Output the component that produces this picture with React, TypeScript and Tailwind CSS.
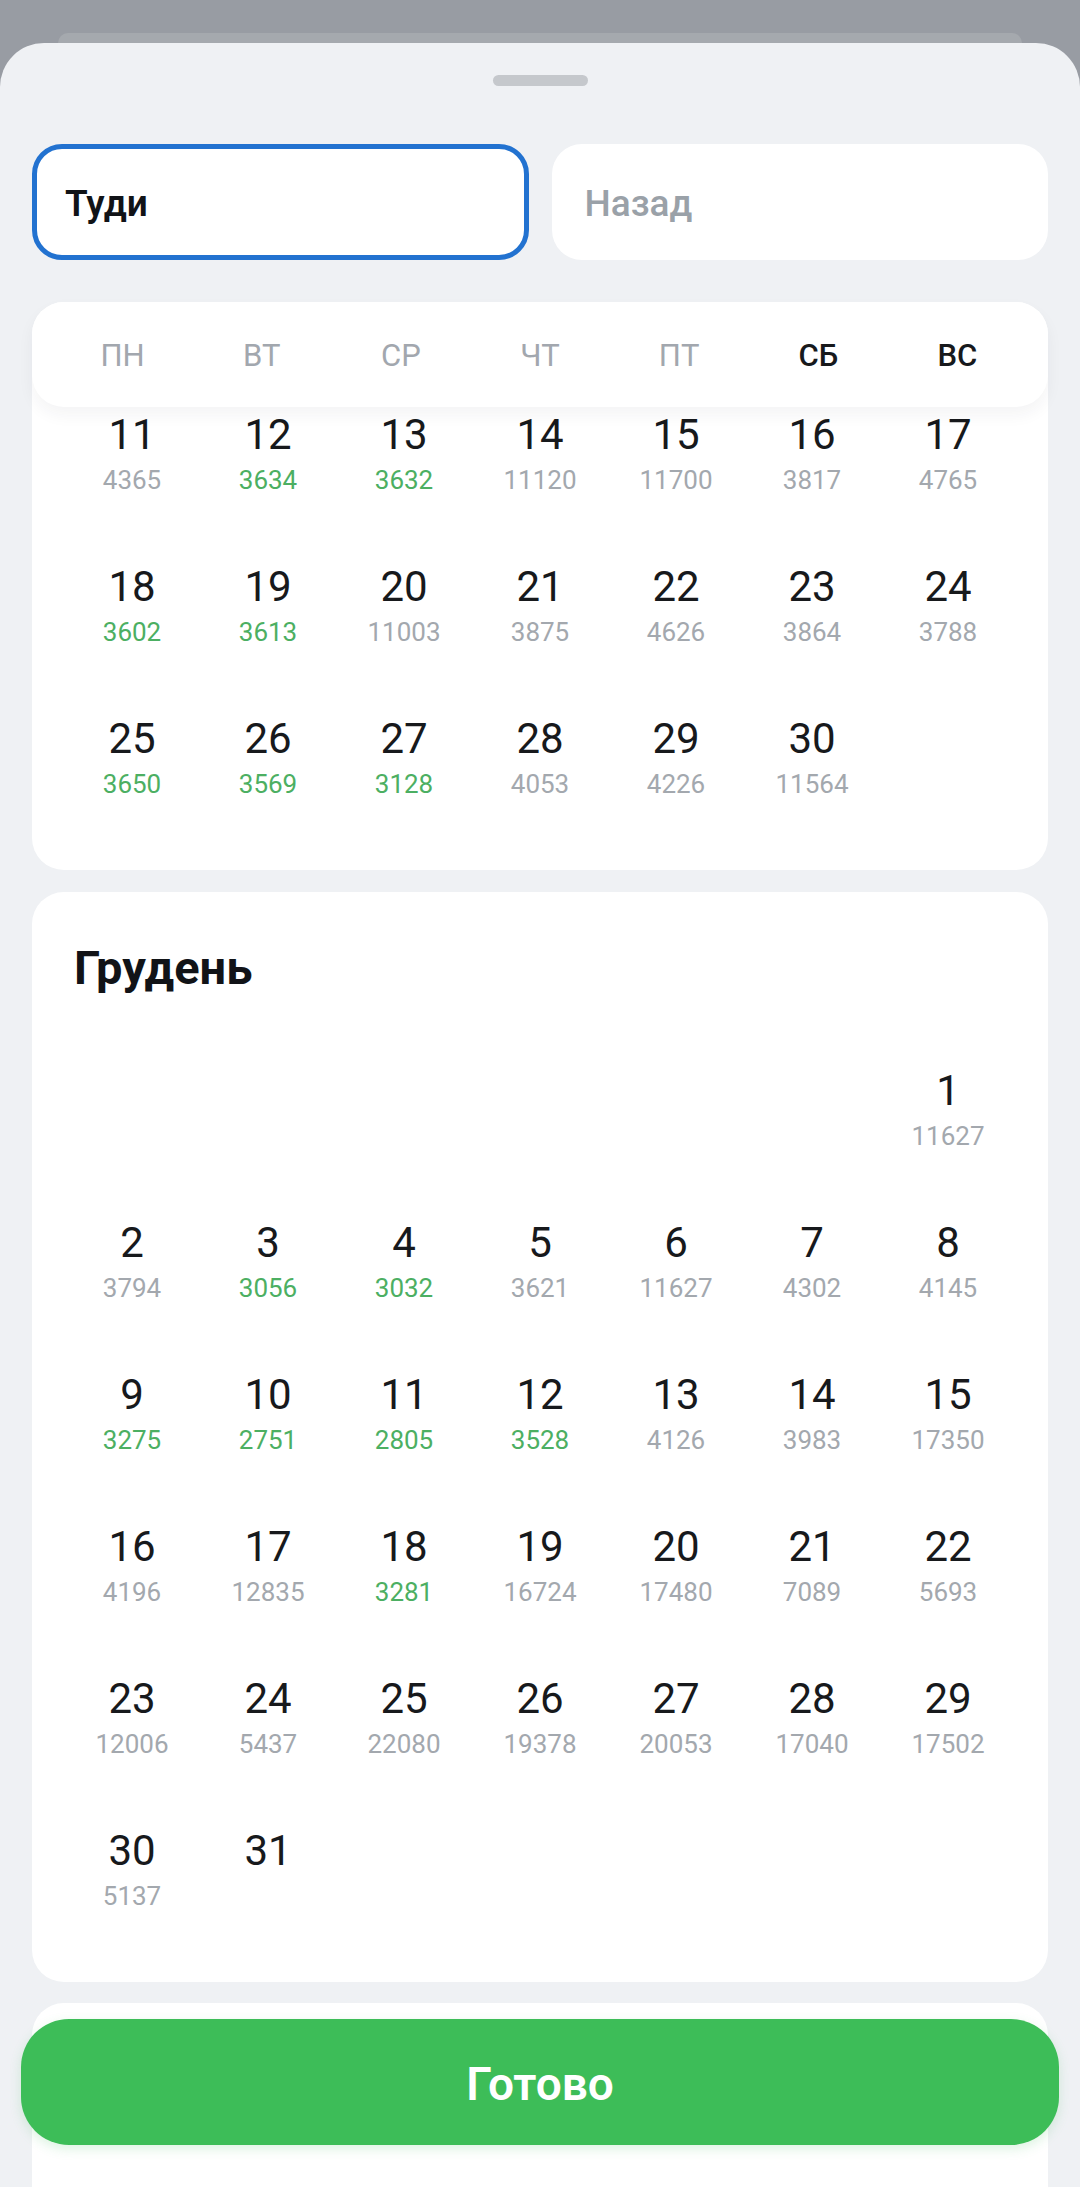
import React from "react"

type Day = { d?: number; p?: number; cheap?: boolean }

const weekdays = ["ПН", "ВТ", "СР", "ЧТ", "ПТ", "СБ", "ВС"]

const november: Day[] = [
  { d: 11, p: 4365 },
  { d: 12, p: 3634, cheap: true },
  { d: 13, p: 3632, cheap: true },
  { d: 14, p: 11120 },
  { d: 15, p: 11700 },
  { d: 16, p: 3817 },
  { d: 17, p: 4765 },
  { d: 18, p: 3602, cheap: true },
  { d: 19, p: 3613, cheap: true },
  { d: 20, p: 11003 },
  { d: 21, p: 3875 },
  { d: 22, p: 4626 },
  { d: 23, p: 3864 },
  { d: 24, p: 3788 },
  { d: 25, p: 3650, cheap: true },
  { d: 26, p: 3569, cheap: true },
  { d: 27, p: 3128, cheap: true },
  { d: 28, p: 4053 },
  { d: 29, p: 4226 },
  { d: 30, p: 11564 },
  {},
]

const december: Day[] = [
  {},
  {},
  {},
  {},
  {},
  {},
  { d: 1, p: 11627 },
  { d: 2, p: 3794 },
  { d: 3, p: 3056, cheap: true },
  { d: 4, p: 3032, cheap: true },
  { d: 5, p: 3621 },
  { d: 6, p: 11627 },
  { d: 7, p: 4302 },
  { d: 8, p: 4145 },
  { d: 9, p: 3275, cheap: true },
  { d: 10, p: 2751, cheap: true },
  { d: 11, p: 2805, cheap: true },
  { d: 12, p: 3528, cheap: true },
  { d: 13, p: 4126 },
  { d: 14, p: 3983 },
  { d: 15, p: 17350 },
  { d: 16, p: 4196 },
  { d: 17, p: 12835 },
  { d: 18, p: 3281, cheap: true },
  { d: 19, p: 16724 },
  { d: 20, p: 17480 },
  { d: 21, p: 7089 },
  { d: 22, p: 5693 },
  { d: 23, p: 12006 },
  { d: 24, p: 5437 },
  { d: 25, p: 22080 },
  { d: 26, p: 19378 },
  { d: 27, p: 20053 },
  { d: 28, p: 17040 },
  { d: 29, p: 17502 },
  { d: 30, p: 5137 },
  { d: 31 },
]

const DayCell = ({ day }: { day: Day }) => (
  <div className="flex h-[152px] flex-col items-center justify-center">
    {day.d !== undefined && (
      <>
        <span className="h-[50px] text-[42px] leading-[50px] text-[#17191c]">
          {day.d}
        </span>
        <span
          className={
            day.cheap
              ? "h-[40px] text-[26px] leading-[40px] text-[#4caf62]"
              : "h-[40px] text-[26px] leading-[40px] text-[#a3a8ae]"
          }
        >
          {day.p ?? ""}
        </span>
      </>
    )}
  </div>
)

const DayGrid = ({ days }: { days: Day[] }) => (
  <div className="grid grid-cols-7 px-[32px]">
    {days.map((day, i) => (
      <DayCell key={i} day={day} />
    ))}
  </div>
)

export default function App() {
  return (
    <div
      className="relative h-[2187px] w-[1080px] overflow-hidden bg-[#989ca3]"
      style={{ fontFamily: "Roboto, 'Noto Sans', sans-serif" }}
    >
      {/* card peeking behind the sheet */}
      <div className="mx-[58px] mt-[33px] h-[10px] rounded-t-[40px] bg-[#a5a9ae]" />

      <div className="h-[2144px] rounded-t-[44px] bg-[#eff1f4]">
        <div className="flex justify-center pt-[32px]">
          <div className="h-[11px] w-[95px] rounded-full bg-[#c5c8cc]" />
        </div>

        <div className="mt-[58px] grid grid-cols-2 gap-[23px] px-[32px]">
          <div className="flex h-[116px] items-center rounded-[30px] border-[5px] border-[#2272d0] bg-white pl-[28px] pt-[4px]">
            <span className="text-[37px] font-semibold text-[#111317]">
              Туди
            </span>
          </div>
          <div className="flex h-[116px] items-center rounded-[30px] bg-white pl-[33px] pt-[4px]">
            <span className="text-[37px] font-medium text-[#9aa1a8]">
              Назад
            </span>
          </div>
        </div>

        <div className="mx-[32px] mt-[42px] rounded-[32px] bg-white pb-[35px]">
          <div className="relative z-10 grid h-[105px] grid-cols-7 items-center rounded-[32px] bg-white px-[21px] pt-[4px] shadow-[0_8px_16px_rgba(30,40,60,0.05)]">
            {weekdays.map((w, i) => (
              <span
                key={w}
                className={
                  i >= 5
                    ? "text-center text-[31px] font-medium text-[#17191c]"
                    : "text-center text-[31px] text-[#a2a7ae]"
                }
              >
                {w}
              </span>
            ))}
          </div>
          <div className="-mt-[28px]">
            <DayGrid days={november} />
          </div>
        </div>

        <div className="mx-[32px] mt-[22px] rounded-[32px] bg-white pb-[35px] pt-[48px]">
          <h2 className="px-[42px] text-[47px] font-bold leading-[56px] text-[#111317]">
            Грудень
          </h2>
          <div className="mt-[39px]">
            <DayGrid days={december} />
          </div>
        </div>

        <div className="mx-[32px] mt-[21px] h-[200px] rounded-t-[32px] bg-white" />
      </div>

      <button className="absolute bottom-[42px] left-[21px] right-[21px] flex h-[126px] items-center justify-center rounded-[48px] bg-[#3dbd58] pt-[4px] shadow-[0_4px_12px_rgba(61,189,88,0.18)]">
        <span className="text-[46px] font-semibold text-white">Готово</span>
      </button>
    </div>
  )
}
